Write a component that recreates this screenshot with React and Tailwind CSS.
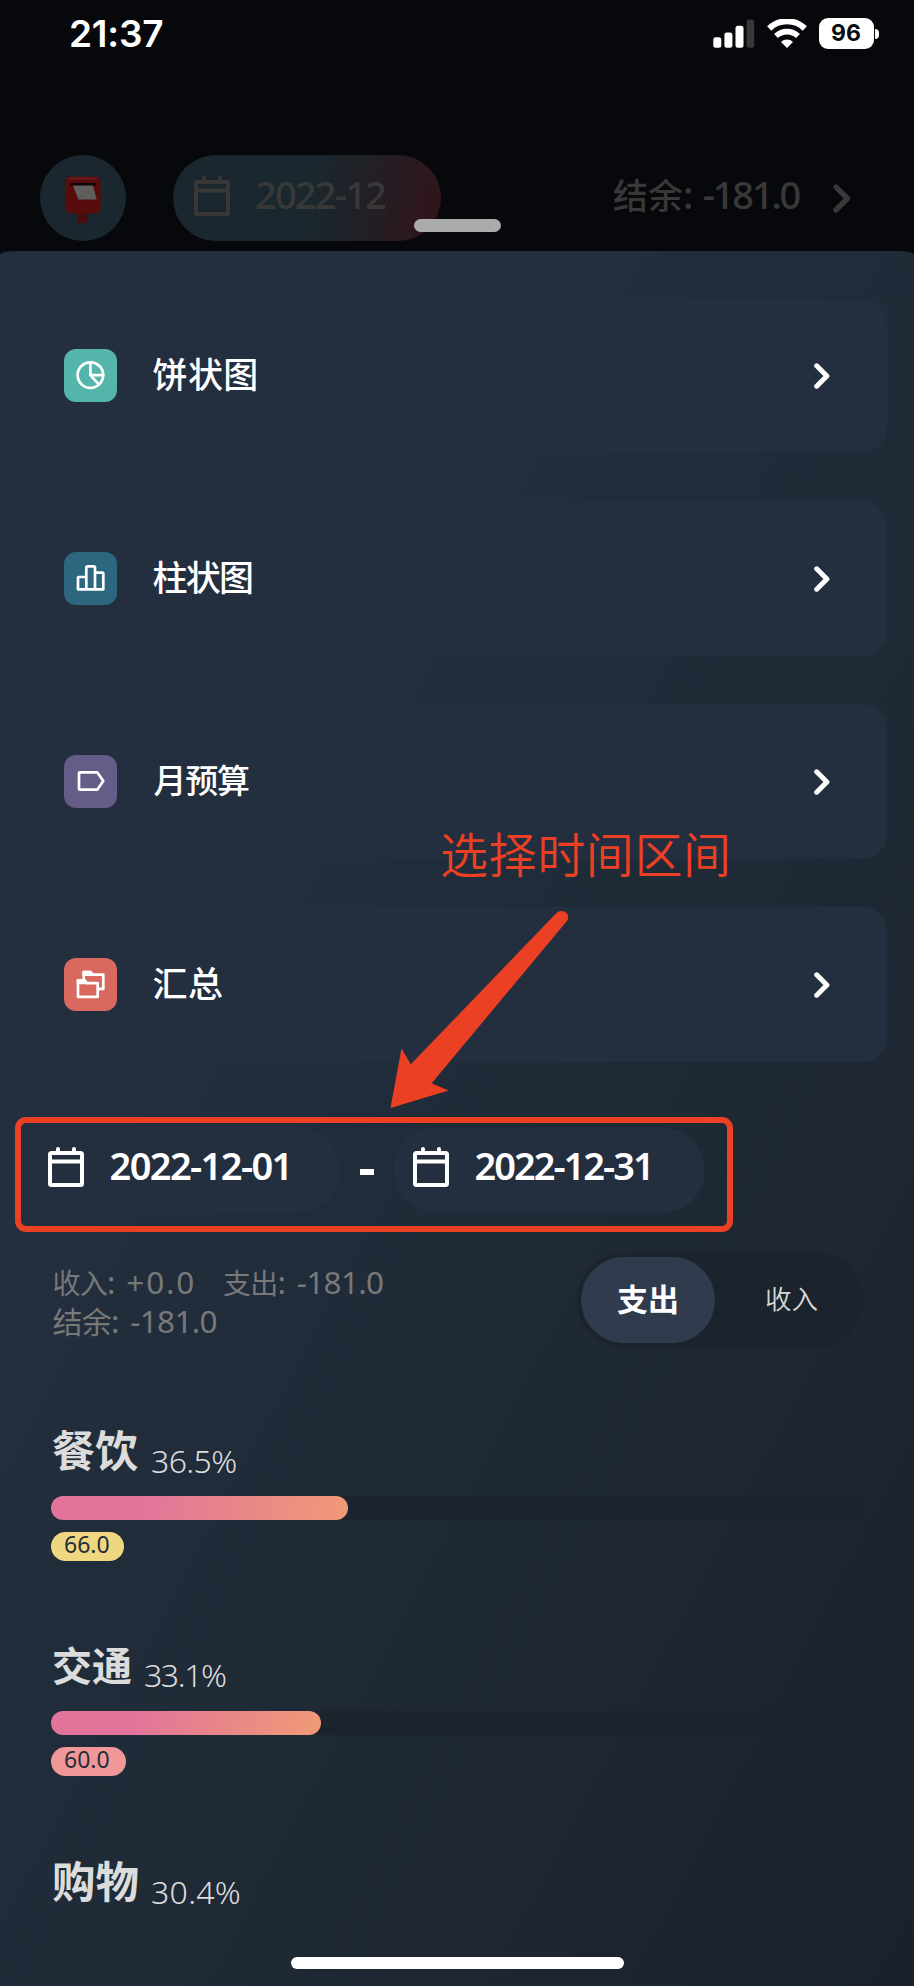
import React from "react";

const FONT = "font-['Noto_Sans','Noto_Sans_CJK_SC',sans-serif]";

function CalendarIcon({ className }) {
  return (
    <svg width="36" height="40" viewBox="0 0 36 40" fill="none" stroke="currentColor" strokeWidth="4" strokeLinejoin="round" strokeLinecap="round" className={className}>
      <rect x="2" y="6" width="32" height="32" rx="1.5" />
      <path d="M2 14.5H34M10 6V2M26 6V2" />
    </svg>
  );
}

function Chevron({ width, height, className }) {
  return (
    <svg width={width} height={height} viewBox="0 0 16 26" fill="none" stroke="currentColor" strokeWidth="5" strokeLinecap="round" strokeLinejoin="round" className={className}>
      <path d="M2.7 2.8L12.9 13L2.7 23.2" />
    </svg>
  );
}

function Glyph({ children }) {
  return (
    <svg width="53" height="53" viewBox="0 0 53 53" fill="none" stroke="white" strokeWidth="2.7" strokeLinejoin="round" strokeLinecap="round">
      {children}
    </svg>
  );
}

const MENU = [
  {
    label: "饼状图",
    box: "bg-[#54b5aa]",
    text: "text-[35px] tracking-[0.4px]",
    icon: (
      <Glyph>
        <circle cx="26.4" cy="26.1" r="12.8" />
        <path d="M26.4 13.3V26.1H39.2M26.4 26.1L35 35.6" />
      </Glyph>
    ),
  },
  {
    label: "柱状图",
    box: "bg-[#2d677f]",
    text: "text-[35px] tracking-[-1.7px]",
    icon: (
      <Glyph>
        <path d="M22.3 37.3H14V25.6Q14 25 14.6 25H22.3M22.3 37.3V15.5Q22.3 14.3 23.5 14.3H29.8Q31 14.3 31 15.5V37.3ZM31 20.7H38.5Q39.3 20.7 39.3 21.5V37.3H31" />
      </Glyph>
    ),
  },
  {
    label: "月预算",
    box: "bg-[#655c88]",
    text: "text-[33px] tracking-[-1.2px] pl-[1px]",
    icon: (
      <Glyph>
        <path d="M16 17.3H33.2L39.3 26L33.2 34.7H16Q15 34.7 15 33.7V18.3Q15 17.3 16 17.3Z" />
      </Glyph>
    ),
  },
  {
    label: "汇总",
    box: "bg-[#d9695e]",
    text: "text-[35px] tracking-[0.4px]",
    icon: (
      <Glyph>
        <path d="M34 30.9H39.3V16.6H28.5L26.5 14H19.7V24" />
        <path d="M14 38.8V22.3H20.5L22.8 25.2H33.7V38.8Z" />
        <path d="M14 22.3H20.5L22.5 25H14ZM19.7 14H26.5L28.5 16.6H19.7Z" fill="white" />
      </Glyph>
    ),
  },
];

const CATEGORIES = [
  { name: "餐饮", percent: "36.5%", width: 297, amount: "66.0", name_: "text-[43px]", pct: "ml-[13px] tracking-[-0.6px]", pill: "w-[73px] bg-[#efd681]" },
  { name: "交通", percent: "33.1%", width: 270, amount: "60.0", name_: "text-[40px]", pct: "ml-[12px] tracking-[-1.4px]", pill: "w-[75px] bg-[#f09898]" },
  { name: "购物", percent: "30.4%", name_: "text-[43.5px]", pct: "ml-[12px] tracking-[0.3px]" },
];

function StatusBar() {
  return (
    <div className="flex h-[67px] items-center justify-between pl-[69px] pr-[35px] text-white">
      <span className="font-['Inter',sans-serif] text-[37px] leading-[40px] font-semibold tracking-[-0.2px]">21:37</span>
      <div className="flex items-center">
        <svg width="42" height="29" viewBox="0 0 42 29">
          <rect x="0.3" y="18.3" width="8" height="10.4" rx="2.5" fill="white" />
          <rect x="11.4" y="13.5" width="8" height="15.2" rx="2.5" fill="white" />
          <rect x="22.5" y="6.8" width="8" height="21.9" rx="2.5" fill="white" />
          <rect x="33.6" y="0.6" width="7.6" height="28.1" rx="2.5" fill="#38393b" />
        </svg>
        <svg width="40" height="30" viewBox="0 0 40 30" className="ml-[12px]" fill="none" stroke="white">
          <path d="M2.2 9.5A25.5 25.5 0 0 1 37.8 9.5" strokeWidth="6" />
          <path d="M9 17A16 16 0 0 1 31 17" strokeWidth="5.6" />
          <path d="M20 29L14 23A8.6 8.6 0 0 1 26 23Z" fill="white" stroke="none" />
        </svg>
        <div className="ml-[12px] flex h-[31px] w-[55px] items-center justify-center rounded-[9px] bg-white font-['Inter',sans-serif] text-[23px] leading-none font-bold text-[#080a0d]">96</div>
        <div className="ml-[1.5px] h-[10px] w-[4px] rounded-r-full bg-white" />
      </div>
    </div>
  );
}

function Header() {
  return (
    <div className="mt-[88px] flex h-[86px] items-center pl-[40px] text-[#383838]">
      <div className="flex size-[86px] items-center justify-center rounded-full bg-[#1a272e]">
        <svg width="36" height="48" viewBox="0 0 36 48" className="mt-[4px]">
          <rect x="13" y="34" width="10" height="13" fill="#470d0c" />
          <rect x="0.5" y="0.5" width="35" height="37" rx="5" fill="#570c0b" />
          <rect x="3" y="1" width="30" height="3" rx="1.5" fill="#651817" />
          <rect x="5" y="7" width="26" height="3" rx="1.5" fill="#140506" />
          <path d="M8 9.5H28L31.5 23.5H13.5Z" fill="#62605f" />
          <path d="M13.5 23.5L21 15L31.5 23.5" fill="none" stroke="#50504f" strokeWidth="0.8" />
        </svg>
      </div>
      <div className="ml-[47px] flex h-[86px] w-[268px] items-center rounded-full bg-[linear-gradient(100deg,#1a272e_50%,#202127_68%,#30151c_95%)] pl-[21px]">
        <CalendarIcon className="-mt-[4px]" />
        <span className="ml-[25px] -mt-[9px] text-[38px] leading-[46px] font-medium tracking-[-1.8px]">2022-12</span>
      </div>
      <div className="ml-[172px] -mt-[8px] flex h-[46px] w-[187px] items-baseline whitespace-nowrap leading-[46px] font-medium">
        <span className="text-[35px]">结余</span>
        <span className="text-[38px] tracking-[-2.2px] [word-spacing:4px]">: -181.0</span>
      </div>
      <Chevron width="18" height="29" className="ml-[33px] mt-[1px]" />
    </div>
  );
}

function DatePill({ children, tracking }) {
  return (
    <div className="flex h-[86px] w-[312px] items-center rounded-full bg-[#232e3e] pl-[20px] text-white">
      <CalendarIcon className="-mt-[5px]" />
      <span className={"ml-[25.500px] -mt-[9px] text-[38px] leading-[46px] font-semibold whitespace-nowrap " + tracking}>{children}</span>
    </div>
  );
}

function Category({ item }) {
  return (
    <div className="h-[215px] text-[#dcdcdc]">
      <div className="flex h-[76px] items-baseline pl-[1px] pt-[3px] whitespace-nowrap">
        <span className={"leading-[56px] font-bold " + item.name_}>{item.name}</span>
        <span className={"relative top-[6px] text-[32px] leading-[40px] font-[350] " + item.pct}>{item.percent}</span>
      </div>
      {item.amount && (
        <>
          <div className="h-[24px] rounded-full bg-[#1b232c]">
            <div className="h-[24px] rounded-full bg-[linear-gradient(100deg,#e2749c_30%,#e6828d_55%,#f09a76_100%)]" style={{ width: item.width }} />
          </div>
          <div className={"mt-[12px] flex h-[29px] items-center rounded-full pl-[13px] text-[23px] leading-[29px] text-[#252d38] " + item.pill}>
            <span className="-mt-[4px]">{item.amount}</span>
          </div>
        </>
      )}
    </div>
  );
}

export default function App() {
  return (
    <div className={"relative h-[1986px] w-[914px] overflow-hidden bg-[#06080c] " + FONT}>
      <StatusBar />
      <Header />
      <div className="mt-[10px] flex h-[1735px] flex-col [border-radius:16px_16px_0_0/4px_4px_0_0] bg-[linear-gradient(to_bottom_right,#232e3e_0%,#232e3e_32%,#1f2b37_52%,#1e2732_74%,#1b242d_88%,#1a212b_100%)] pt-[47.5px]">
        <div className="flex flex-col gap-[48px] pr-[27px] pl-[27px]">
          {MENU.map((m) => (
            <div key={m.label} className="flex h-[154.9px] items-center rounded-[24px] bg-[#232e3e] pr-[57.5px] pl-[36.5px] text-white">
              <div className={"size-[53px] shrink-0 rounded-[12px] " + m.box}>{m.icon}</div>
              <span className={"ml-[36px] -mt-[1px] flex-1 leading-[50px] font-medium " + m.text}>{m.label}</span>
              <Chevron width="16" height="26" />
            </div>
          ))}
        </div>

        <div className="mt-[64.5px] flex items-center pl-[28px]">
          <DatePill tracking="tracking-[-1.6px]">2022-12-01</DatePill>
          <div className="flex w-[53px] justify-center pt-[4px]">
            <span className="h-[6px] w-[14px] bg-white" />
          </div>
          <DatePill tracking="tracking-[-2px]">2022-12-31</DatePill>
        </div>

        <div className="mt-[40px] flex h-[95px] items-start justify-between pr-[51px] pl-[52.5px]">
          <div className="pt-[9px] text-[31.5px] tracking-[-0.7px] text-[#787878] [word-spacing:4px]">
            <div className="flex h-[39.5px] leading-[39.5px] whitespace-nowrap">
              <div className="w-[170.5px]"><span className="text-[28px]">收入</span>: <span className="tracking-[1.8px]">+0.0</span></div>
              <div><span className="text-[28px]">支出</span>: -181.0</div>
            </div>
            <div className="h-[39.5px] leading-[39.5px] whitespace-nowrap"><span className="text-[30px]">结余</span>: -181.0</div>
          </div>
          <div className="flex h-[95px] w-[286px] items-center rounded-full bg-[#1b242d] pl-[4px]">
            <div className="flex h-[86px] w-[134px] items-center justify-center rounded-full bg-[#303c4e] text-[31px] font-bold text-white">
              <span className="-mt-[2px]">支出</span>
            </div>
            <div className="flex flex-1 items-center justify-center pl-[5px] text-[26.5px] font-[350] text-[#d8d8d8]">
              <span className="-mt-[1px]">收入</span>
            </div>
          </div>
        </div>

        <div className="mt-[72px] pr-[51px] pl-[51px]">
          {CATEGORIES.map((c) => (
            <Category key={c.name} item={c} />
          ))}
        </div>
      </div>

      <div className="absolute top-[219px] left-[414px] h-[13px] w-[87px] rounded-full bg-[#ababab]" />
      <div className="absolute top-[1957px] left-[291px] h-[12px] w-[333px] rounded-full bg-white" />
      <div className="absolute top-[1117px] left-[15px] h-[115px] w-[718px] rounded-[11px] border-[6px] border-[#ec4025]" />
      <div className="absolute top-[820px] left-[440px] text-[48px] leading-[70px] font-[350] tracking-[0.6px] whitespace-nowrap text-[#ec4025]">选择时间区间</div>
      <svg className="absolute top-[905px] left-[385px]" width="190" height="210" viewBox="385 905 190 210" fill="#ec4025">
        <path d="M390.5 1108L401.5 1048.5L410.8 1064.3L556 913.5C559 910.2 564.500 910.200 567 913.5C569 916.500 568.400 919 566.500 921.500L431.700 1083.300L448.500 1090.600Z" />
      </svg>
    </div>
  );
}
